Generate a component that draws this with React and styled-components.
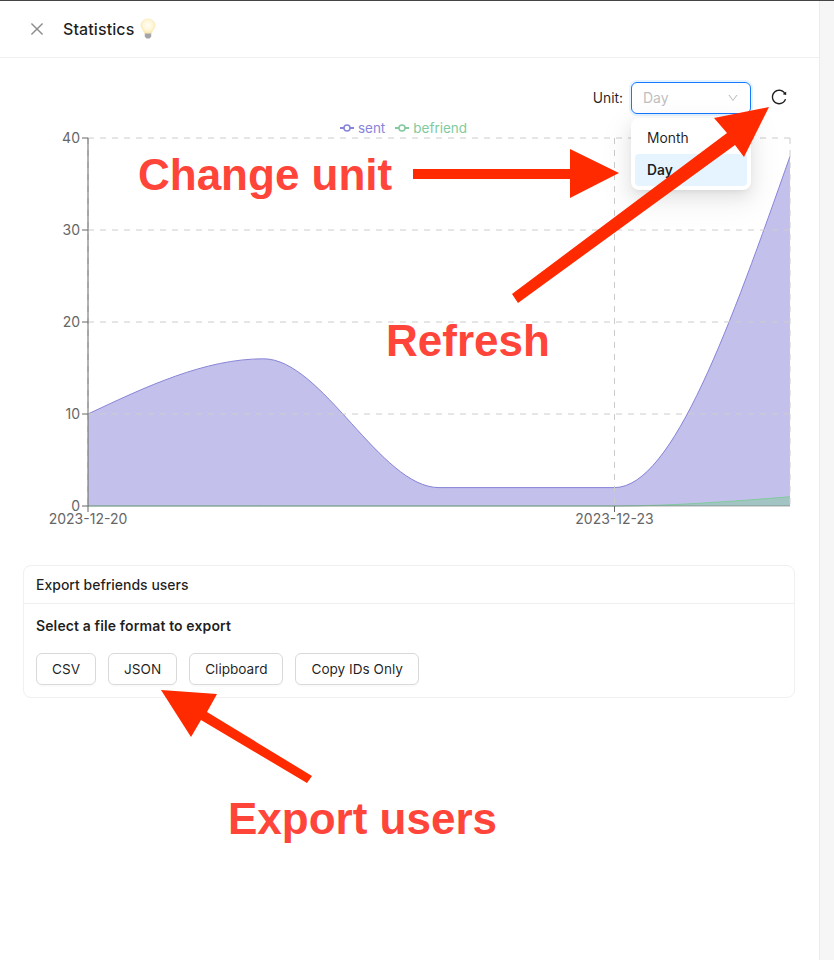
import React from 'react'
import styled, { createGlobalStyle } from 'styled-components'
import { AiOutlineClose, AiOutlineDown, AiOutlineReload } from 'react-icons/ai'

const GlobalStyle = createGlobalStyle`
  html, body {
    margin: 0;
    padding: 0;
    background: #fff;
    font-family: Inter, "Liberation Sans", sans-serif;
    color: rgba(0,0,0,.88);
    overflow: hidden;
  }
`

const SENT = '#8884d8'
const BEFRIEND = '#82ca9d'

const X = [88, 263.5, 439, 614.5, 790]
const toY = v => 506 - v * 9.2
const sent = [10, 16, 2, 2, 38]
const befriend = [0, 0, 0, 0, 1]

// same curve as d3 curveMonotoneX
const sign = n => (n < 0 ? -1 : 1)
const curve = values => {
  const ys = values.map(toY)
  const slopes = ys.slice(1).map((y, i) => (y - ys[i]) / (X[i + 1] - X[i]))
  const t = ys.map(() => 0)
  for (let i = 1; i < ys.length - 1; i++) {
    const a = slopes[i - 1]
    const b = slopes[i]
    const p = (a + b) / 2
    t[i] = (sign(a) + sign(b)) * Math.min(Math.abs(a), Math.abs(b), 0.5 * Math.abs(p)) || 0
  }
  t[0] = (3 * slopes[0] - t[1]) / 2
  t[t.length - 1] = (3 * slopes[slopes.length - 1] - t[t.length - 2]) / 2
  let d = `M${X[0]},${ys[0]}`
  for (let i = 0; i < ys.length - 1; i++) {
    const h = (X[i + 1] - X[i]) / 3
    d += `C${X[i] + h},${ys[i] + h * t[i]} ${X[i + 1] - h},${ys[i + 1] - h * t[i + 1]} ${X[i + 1]},${ys[i + 1]}`
  }
  return d
}

const Page = styled.div`
  position: relative;
  display: flex;
  width: 834px;
  height: 960px;
  overflow: hidden;
  border-top: 1px solid #444;
  box-sizing: border-box;
`
const Drawer = styled.div`
  width: 819px;
  flex: none;
  display: flex;
  flex-direction: column;
`
const ScrollTrack = styled.div`
  flex: 1;
  background: #f6f6f6;
  border-left: 1px solid #ececec;
`
const Header = styled.header`
  height: 57px;
  box-sizing: border-box;
  display: flex;
  align-items: center;
  padding: 0 28px;
  border-bottom: 1px solid #f0f0f0;
`
const CloseButton = styled.span`
  display: flex;
  width: 18px;
  margin-right: 17px;
  color: rgba(0,0,0,.45);
  font-size: 18px;
`
const Title = styled.h1`
  margin: 0;
  font-size: 16px;
  line-height: 22px;
  font-weight: 500;
  letter-spacing: .1px;
  display: flex;
  align-items: center;
  gap: 5px;
`
const Body = styled.div`
  padding: 24px 24px 0 23px;
`
const Toolbar = styled.div`
  display: flex;
  justify-content: flex-end;
  align-items: center;
  height: 32px;
  padding-right: 7px;
`
const UnitLabel = styled.label`
  font-size: 13.8px;
  margin-right: 8px;
`
const SelectWrap = styled.div`
  position: relative;
  width: 120px;
`
const SelectBox = styled.div`
  height: 32px;
  box-sizing: border-box;
  display: flex;
  align-items: center;
  justify-content: space-between;
  padding: 0 11px 1px;
  border: 1px solid #1677ff;
  border-radius: 6px;
  box-shadow: 0 0 0 2px rgba(5,145,255,.1);
  color: #bfbfbf;
  font-size: 14px;
  svg { font-size: 12px; }
`
const Menu = styled.div`
  position: absolute;
  top: 36px;
  left: 0;
  width: 120px;
  box-sizing: border-box;
  padding: 4px;
  background: #fff;
  border-radius: 8px;
  box-shadow: 0 6px 16px 0 rgba(0,0,0,.08), 0 3px 6px -4px rgba(0,0,0,.12), 0 9px 28px 8px rgba(0,0,0,.05);
  z-index: 2;
`
const MenuItem = styled.div`
  height: 32px;
  box-sizing: border-box;
  display: flex;
  align-items: center;
  padding: 0 12px 1px;
  font-size: 13.8px;
  border-radius: 4px;
  font-weight: ${p => (p.$active ? 600 : 400)};
  background: ${p => (p.$active ? '#e6f4ff' : 'transparent')};
`
const RefreshButton = styled.span`
  display: flex;
  margin: -2px 0 0 19px;
  font-size: 18px;
  color: rgba(0,0,0,.88);
`
const Legend = styled.div`
  height: 22px;
  box-sizing: border-box;
  display: flex;
  justify-content: center;
  align-items: center;
  gap: 10px;
  font-size: 13.5px;
  line-height: 16px;
  padding: 6px 11px 0 0;
`
const LegendItem = styled.span`
  display: flex;
  align-items: center;
  gap: 4px;
  color: ${p => p.$color};
`
const ChartSvg = styled.svg`
  display: block;
  overflow: visible;
`
const AxisText = styled.text`
  font-family: Inter, "Liberation Sans", sans-serif;
  font-size: 14px;
  fill: #666;
`
const Card = styled.section`
  margin-top: 9px;
  width: 772px;
  box-sizing: border-box;
  border: 1px solid #f0f0f0;
  border-radius: 8px;
`
const CardHead = styled.div`
  height: 38px;
  box-sizing: border-box;
  display: flex;
  align-items: center;
  padding: 0 12px;
  font-size: 14px;
  font-weight: 500;
  border-bottom: 1px solid #f0f0f0;
`
const CardBody = styled.div`
  padding: 11px 12px 12px;
`
const CardLabel = styled.div`
  font-size: 14px;
  font-weight: 600;
  letter-spacing: .12px;
  line-height: 22px;
  margin-bottom: 16px;
`
const ButtonRow = styled.div`
  display: flex;
  gap: 12px;
`
const Button = styled.button`
  height: 32px;
  box-sizing: border-box;
  padding: 0 15px;
  background: #fff;
  border: 1px solid #d9d9d9;
  border-radius: 6px;
  box-shadow: 0 2px 0 rgba(0,0,0,.02);
  font-family: inherit;
  font-size: 13.6px;
  color: rgba(0,0,0,.88);
`
const AnnotationLayer = styled.svg`
  position: absolute;
  top: -1px;
  left: 0;
  pointer-events: none;
  z-index: 3;
`
const Note = styled.div`
  position: absolute;
  left: ${p => p.$x}px;
  top: ${p => p.$y}px;
  font-family: "Liberation Sans", Arial, sans-serif;
  font-weight: 700;
  font-size: 44px;
  line-height: 50px;
  color: #ff453a;
  white-space: nowrap;
  z-index: 3;
`

const Bulb = () => (
  <svg width="18" height="22" viewBox="0 0 18 22">
    <defs>
      <radialGradient id="glass" cx="50%" cy="42%" r="55%">
        <stop offset="0%" stopColor="#fffef6" />
        <stop offset="65%" stopColor="#fff6d6" />
        <stop offset="100%" stopColor="#fbe7ae" />
      </radialGradient>
    </defs>
    <path d="M9 1C4.800 1 2 4 2 7.600C2 10.500 4.600 12 5.600 15.500H12.400C13.400 12 16 10.500 16 7.600C16 4 13.200 1 9 1Z" fill="url(#glass)" stroke="#f8e6b4" strokeWidth=".6" />
    <path d="M5.800 15.500H12.200V18.600L10.600 20.600H7.400L5.800 18.600Z" fill="#a3a3a8" />
  </svg>
)

const Chart = () => {
  const sentLine = curve(sent)
  const befriendLine = curve(befriend)
  return (
    <ChartSvg width="772" height="420" viewBox="23 136 772 420">
      <path d={`${sentLine}L790,506L88,506Z`} fill={SENT} fillOpacity=".5" />
      <path d={`${befriendLine}L790,506L88,506Z`} fill={BEFRIEND} fillOpacity=".5" />
      <path d={sentLine} fill="none" stroke={SENT} />
      <path d={befriendLine} fill="none" stroke={BEFRIEND} />
      <g stroke="#ccc" strokeDasharray="6 6" fill="none">
        {[138, 230, 322, 414].map(y => <line key={y} x1="88" x2="790" y1={y} y2={y} />)}
        {[88, 614.5, 790].map(x => <line key={x} x1={x} x2={x} y1="138" y2="506" />)}
      </g>
      <g stroke="#666" fill="none">
        <line x1="88" x2="88" y1="138" y2="506" />
        <line x1="88" x2="790" y1="506" y2="506" strokeOpacity=".55" />
        {[138, 230, 322, 414, 506].map(y => <line key={y} x1="82" x2="88" y1={y} y2={y} />)}
        {[88, 614.5].map(x => <line key={x} x1={x} x2={x} y1="506" y2="512" />)}
      </g>
      {[40, 30, 20, 10, 0].map(v => (
        <AxisText key={v} x="80" y={toY(v) + 5} textAnchor="end">{v}</AxisText>
      ))}
      <AxisText x="88" y="524" textAnchor="middle">2023-12-20</AxisText>
      <AxisText x="614.5" y="524" textAnchor="middle">2023-12-23</AxisText>
    </ChartSvg>
  )
}

const LegendIcon = ({ color }) => (
  <svg width="14" height="14" viewBox="0 0 14 14">
    <line x1="0" x2="14" y1="7" y2="7" stroke={color} strokeWidth="2" />
    <circle cx="7" cy="7" r="3" fill="#fff" stroke={color} strokeWidth="1.500" />
  </svg>
)

const Annotations = () => (
  <>
    <AnnotationLayer width="834" height="960" viewBox="0 0 834 960">
      <g fill="#ff2a00">
        <polygon points="413,169 570,169 570,149 619,173 570,198 570,179 413,179" />
        <polygon points="512,294 727,133 714,118 769,107 744,157 735,145 518,303" />
        <polygon points="161,690 217,694 207,712 312,776 307,783 201,720 191,737" />
      </g>
    </AnnotationLayer>
    <Note $x={138} $y={149}>Change unit</Note>
    <Note $x={386} $y={315}>Refresh</Note>
    <Note $x={228} $y={793}>Export users</Note>
  </>
)

export default function App() {
  return (
    <Page>
      <GlobalStyle />
      <Drawer>
        <Header>
          <CloseButton><AiOutlineClose /></CloseButton>
          <Title>Statistics <Bulb /></Title>
        </Header>
        <Body>
          <Toolbar>
            <UnitLabel>Unit:</UnitLabel>
            <SelectWrap>
              <SelectBox>Day <AiOutlineDown /></SelectBox>
              <Menu>
                <MenuItem>Month</MenuItem>
                <MenuItem $active>Day</MenuItem>
              </Menu>
            </SelectWrap>
            <RefreshButton><AiOutlineReload /></RefreshButton>
          </Toolbar>
          <Legend>
            <LegendItem $color={SENT}><LegendIcon color={SENT} />sent</LegendItem>
            <LegendItem $color={BEFRIEND}><LegendIcon color={BEFRIEND} />befriend</LegendItem>
          </Legend>
          <Chart />
          <Card>
            <CardHead>Export befriends users</CardHead>
            <CardBody>
              <CardLabel>Select a file format to export</CardLabel>
              <ButtonRow>
                <Button>CSV</Button>
                <Button>JSON</Button>
                <Button>Clipboard</Button>
                <Button>Copy IDs Only</Button>
              </ButtonRow>
            </CardBody>
          </Card>
        </Body>
      </Drawer>
      <ScrollTrack />
      <Annotations />
    </Page>
  )
}
